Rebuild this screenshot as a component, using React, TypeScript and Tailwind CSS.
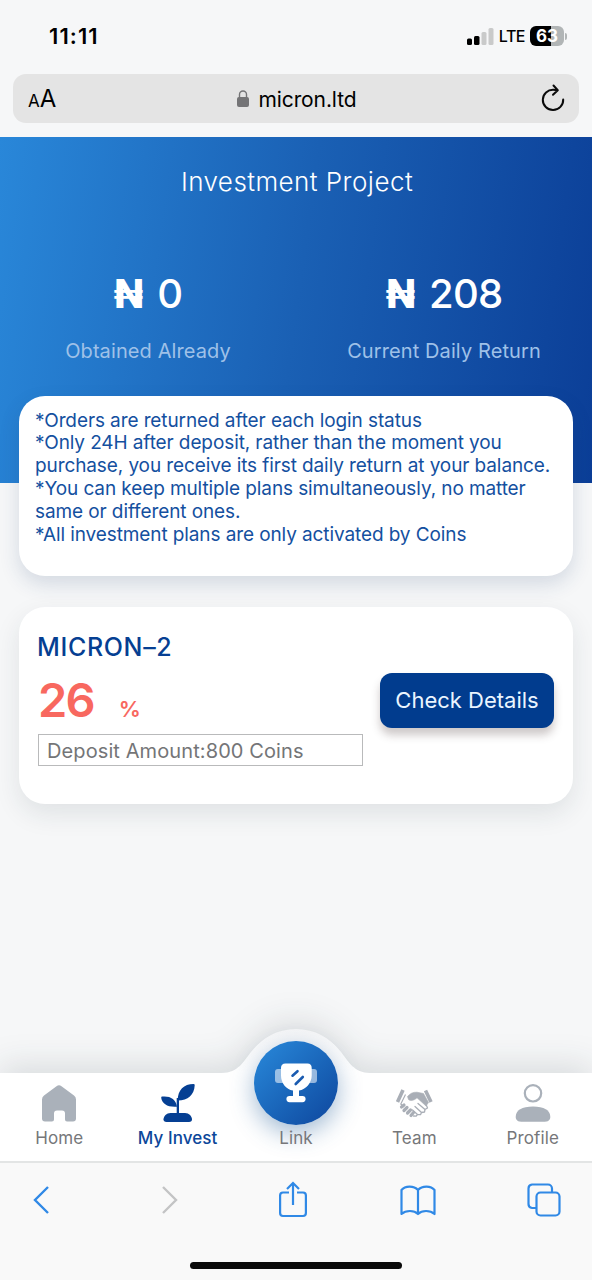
import type { ReactNode } from 'react';

const notes = [
  '*Orders are returned after each login status',
  '*Only 24H after deposit, rather than the moment you',
  'purchase, you receive its first daily return at your balance.',
  '*You can keep multiple plans simultaneously, no matter',
  'same or different ones.',
  '*All investment plans are only activated by Coins',
];

function HomeIcon() {
  return (
    <svg width="36" height="38" viewBox="0 0 36 38" fill="#aab1ba">
      <path d="M15.500 2.200a4 4 0 0 1 5 0L33 11.600a5 5 0 0 1 2 4V34.500a3 3 0 0 1-3 3H26a2 2 0 0 1-2-2V29.500a3 3 0 0 0-3-3H16a3 3 0 0 0-3 3V35.500a2 2 0 0 1-2 2H4a3 3 0 0 1-3-3V15.600a5 5 0 0 1 2-4z" />
    </svg>
  );
}

function PlantIcon() {
  return (
    <svg width="36" height="40" viewBox="0 0 36 40" fill="#053f93">
      <path d="M17.800 17.500C17.500 7 24 1 33.500 1Q34.800 1 34.700 2.300C34.200 12 28 17.500 17.800 17.500z" />
      <path d="M17 23.700C8 24.500 2 21 1.200 14.800Q1.100 13.700 2.200 13.600C10 12.800 16 16 17 23.700z" />
      <path d="M16.700 15H19V31H16.700z" />
      <path d="M10.500 30H25C29 30 32 33.500 32 36.300C32 38 31 39 29 39H6.500C4.500 39 3.500 38 3.500 36.300C3.500 33.500 6.500 30 10.500 30z" />
    </svg>
  );
}

function TeamIcon() {
  return (
    <svg width="38" height="30" viewBox="0 0 38 30" fill="none" stroke="#a9aeb6" strokeLinejoin="round">
      <path d="M8 2L2.500 14M30.500 2.500L36 14" strokeWidth="3.600" />
      <path d="M12.500 8.500C15 5.500 18 4 22 4.200L28.500 5.500L33.500 14.500L31 18L22 9.800C19 12.500 15.500 13.500 13.500 11.500z" fill="#a9aeb6" strokeWidth=".6" />
      <path d="M10.500 6.500L5.800 16L9 19" strokeWidth="1.200" />
      <path d="M6.500 19L9 17M9 22.500L12 19.500M12.500 25L15.500 22M16 27.500L18.500 24.500" strokeWidth="3.200" strokeLinecap="round" />
      <path d="M18.500 28L21 28.200L22.500 26.500L17.500 22M22.500 26.500L25.500 26.700L26.500 24.500L20 18.500M26.500 24.500L29.500 24L30 21.500L23 15.500M30 21.500L32.500 20L31.500 17.500" strokeWidth="1.300" strokeLinecap="round" />
    </svg>
  );
}

function ProfileIcon() {
  return (
    <svg width="36" height="40" viewBox="0 0 36 40">
      <circle cx="18" cy="10.300" r="8.200" fill="none" stroke="#aab1ba" strokeWidth="2.200" />
      <path d="M.7 34C.7 27 7 23.500 18 23.500S35.300 27 35.300 34C35.300 37 33 38.700 30 38.700H6C3 38.700 .7 37 .7 34z" fill="#aab1ba" />
    </svg>
  );
}

function TrophyIcon() {
  return (
    <svg width="42" height="42" viewBox="0 0 42 42" fill="#fff">
      <rect x="0" y="7" width="42" height="14" rx="3" opacity=".55" />
      <path d="M10.500 1.500H32.500Q36.700 1.500 36.700 6V13.500C36.700 21 31 27.500 24 28.500V34H27.500A3 3 0 0 1 27.500 40.200H14.500A3 3 0 0 1 14.500 34H18V28.500C11 27.500 6 21 6 13.500V6Q6 1.500 10.500 1.500z" />
      <path d="M17.500 13.700L22.500 9.200M20.700 22L27.800 15" stroke="#1a5bb0" strokeWidth="2.600" strokeLinecap="round" />
    </svg>
  );
}

const tabs: { name: string; icon?: ReactNode; active?: boolean }[] = [
  { name: 'Home', icon: <HomeIcon /> },
  { name: 'My Invest', icon: <PlantIcon />, active: true },
  { name: 'Link' },
  { name: 'Team', icon: <TeamIcon /> },
  { name: 'Profile', icon: <ProfileIcon /> },
];

function StatusBar() {
  return (
    <div className="flex h-[74px] items-start justify-between pl-[49px] pr-[25px] pt-6">
      <span className="text-[22px] leading-6 font-semibold tracking-[1.1px]">11:11</span>
      <div className="flex items-center gap-[5px]">
        <svg width="27" height="17" viewBox="0 0 27 17">
          <rect x="0" y="10.500" width="5" height="6.500" rx="1.500" />
          <rect x="7" y="8" width="5.500" height="9" rx="1.500" />
          <rect x="14.500" y="4" width="5" height="13" rx="1.500" fill="#c9caca" />
          <rect x="21.500" y="0" width="5" height="17" rx="1.500" fill="#c9caca" />
        </svg>
        <span className="text-[16px] leading-6 font-medium tracking-[-0.5px]">LTE</span>
        <div className="flex items-center gap-px">
          <div className="flex h-[20px] w-[34px] items-center justify-center rounded-[6px] bg-linear-to-r from-black from-63% to-[#b1b5b6] to-63% text-[17px] font-bold leading-none text-white">
            63
          </div>
          <div className="h-[7px] w-[2px] rounded-r-full bg-[#b1b5b6]" />
        </div>
      </div>
    </div>
  );
}

function AddressBar() {
  return (
    <div className="mx-[13px] mb-[14px] flex h-[49px] items-center justify-between rounded-[13px] bg-[#e4e4e4] pl-[15px] pr-[14px]">
      <span className="w-[40px] pt-[3px] text-[24px] leading-7">
        <span className="text-[17px]">A</span>A
      </span>
      <div className="flex items-center gap-[9px] pl-px">
        <svg width="12" height="17" viewBox="0 0 12 17">
          <rect x="0" y="7" width="12" height="10" rx="2" fill="#747476" />
          <path d="M2.500 8V4.500a3.500 3.500 0 0 1 7 0V8" fill="none" stroke="#747476" strokeWidth="1.400" />
        </svg>
        <span className="pt-[2px] text-[21px] tracking-[-0.1px]">micron.ltd</span>
      </div>
      <div className="flex w-[40px] justify-end">
        <svg className="-mt-px" width="24" height="28" viewBox="0 0 24 28" fill="none" stroke="#0a0a0a" strokeWidth="2" strokeLinecap="round" strokeLinejoin="round">
          <path d="M16.500 6.200L12.500 5.700A10.200 10.200 0 1 0 22.200 15.500M12.500 1.500L16.800 6.200L12 10.700" />
        </svg>
      </div>
    </div>
  );
}

function Stat({ value, label }: { value: string; label: string }) {
  return (
    <div className="flex w-1/2 flex-col items-center">
      <div className="flex items-center gap-[14px] pt-px text-[40px] leading-[48px] font-medium text-white">
        <span className="text-[39px] font-extrabold">₦</span>
        <span className="tracking-[-0.8px]">{value}</span>
      </div>
      <div className="mt-[21px] text-[20px] leading-6 tracking-[0.1px] text-[#9fc1e8]">{label}</div>
    </div>
  );
}

function TabBar() {
  return (
    <nav className="relative h-[88px]">
      <svg className="absolute -top-[44px] left-0 overflow-visible drop-shadow-[0_-8px_16px_rgba(20,30,40,0.12)]" width="592" height="132" viewBox="0 0 592 132">
        <defs>
          <linearGradient id="bump" x1="0" y1="0" x2="0" y2="1">
            <stop offset="0" stopColor="#f6f6f7" />
            <stop offset=".33" stopColor="#fff" />
          </linearGradient>
        </defs>
        <path d="M0 44H222C238 44 244 32 251 23C262 9 277 0 296 0C315 0 330 9 341 23C348 32 354 44 370 44H592V132H0z" fill="url(#bump)" />
      </svg>
      <div className="absolute -top-[32px] left-[254px] flex size-[84px] items-center justify-center rounded-full bg-linear-to-br from-[#2a8adb] to-[#0f469d] shadow-[0_8px_24px_rgba(30,90,150,0.42)]">
        <TrophyIcon />
      </div>
      <div className="relative flex h-full">
        {tabs.map((tab) => (
          <div
            key={tab.name}
            className={`flex w-1/5 flex-col items-center pt-[10px] text-[17px] leading-5 tracking-[0.1px] ${
              tab.active ? 'font-medium text-[#0c479a]' : 'text-[#76777a]'
            }`}
          >
            <div className="flex h-[40px] items-center">{tab.icon}</div>
            <span className="mt-[5px]">{tab.name}</span>
          </div>
        ))}
      </div>
    </nav>
  );
}

function BrowserToolbar() {
  return (
    <footer className="relative flex h-[119px] flex-col items-center justify-between border-t-2 border-[#e3e5e5] bg-[#f9f9f9] pb-[11px] pt-[17px]">
      <div className="flex w-full items-center pl-[33px] text-[#3089e6]">
        <svg width="18" height="40" viewBox="0 0 18 40" fill="none" stroke="currentColor" strokeWidth="2.400">
          <path d="M15 7L2 20L15 33" />
        </svg>
        <svg className="ml-[110px]" width="18" height="40" viewBox="0 0 18 40" fill="none" stroke="#c3c4c5" strokeWidth="2.400">
          <path d="M2 7L15 20L2 33" />
        </svg>
        <svg className="ml-[100px]" width="28" height="40" viewBox="0 0 28 40" fill="none" stroke="currentColor" strokeWidth="2.200">
          <path d="M10 12.500H4A3 3 0 0 0 1.100 15.500V33A3 3 0 0 0 4 36H24A3 3 0 0 0 26.900 33V15.500A3 3 0 0 0 24 12.500H18M14 25V3M8 9L14 3L20 9" />
        </svg>
        <svg className="ml-[93px]" width="36" height="40" viewBox="0 0 36 40" fill="none" stroke="currentColor" strokeWidth="2.200" strokeLinejoin="round">
          <path d="M18 10C14 5.500 5 5.500 1.500 10V34C6 30 14 30 18 34C22 30 30 30 34.500 34V10C31 5.500 22 5.500 18 10V34" />
        </svg>
        <svg className="ml-[91px]" width="34" height="40" viewBox="0 0 34 40" fill="none" stroke="currentColor" strokeWidth="2.200">
          <rect x="9.500" y="12.500" width="23" height="23" rx="4" />
          <path d="M25 12V8.500A4 4 0 0 0 21 4.500H5A4 4 0 0 0 1.500 8.500V24A4 4 0 0 0 5 28H9" />
        </svg>
      </div>
      <div className="h-[7px] w-[212px] rounded-full bg-[#0a0a0a]" />
    </footer>
  );
}

export default function App() {
  return (
    <div className="flex h-[1280px] w-[592px] flex-col overflow-hidden bg-[#f6f7f8] font-['Inter',sans-serif] text-black">
      <StatusBar />
      <AddressBar />
      <header className="h-[346px] shrink-0 bg-[linear-gradient(98deg,#2987d9_0%,#1a60b4_50%,#0b3e97_100%)] pt-[29px]">
        <h1 className="pl-[2px] text-center text-[26px] leading-8 font-light tracking-[0.45px] text-white">Investment Project</h1>
        <div className="mt-[71px] flex">
          <Stat value="0" label="Obtained Already" />
          <Stat value="208" label="Current Daily Return" />
        </div>
      </header>

      <main className="flex-1">
        <section className="relative mx-[19px] -mt-[87px] h-[180px] rounded-[26px] bg-white px-4 pt-[13.5px] shadow-[0_8px_20px_rgba(30,60,110,0.16)]">
          {notes.map((line) => (
            <p key={line} className="text-[19px] leading-[22.9px] tracking-[-0.1px] whitespace-nowrap text-[#14509f]">{line}</p>
          ))}
        </section>

        <section className="mx-[19px] mt-[31px] flex h-[197px] items-start justify-between rounded-[26px] bg-white pl-[19px] pr-[19px] pt-[25px] shadow-[0_10px_26px_rgba(30,50,60,0.1)]">
          <div>
            <h2 className="-ml-px text-[25px] leading-[30px] font-medium tracking-[0.65px] text-[#063f92]">MICRON–2</h2>
            <div className="mt-[10px] flex items-baseline gap-[25px] text-[#f8685f]">
              <span className="text-[47px] leading-[56px] font-semibold tracking-[-1.8px]">26</span>
              <span className="text-[22px] font-semibold">%</span>
            </div>
            <div className="mt-[6px] h-[32px] w-[325px] border-[1.5px] border-[#b9babb] pl-2 text-[20px] leading-[32px] tracking-[0.1px] text-[#747577]">
              Deposit Amount:800 Coins
            </div>
          </div>
          <button className="mt-[41px] h-[55px] w-[174px] rounded-[12px] bg-[#013c8e] text-[22px] text-[#eaf5ff] shadow-[0_7px_8px_rgba(60,40,40,0.25)]">
            Check Details
          </button>
        </section>
      </main>

      <TabBar />
      <BrowserToolbar />
    </div>
  );
}
